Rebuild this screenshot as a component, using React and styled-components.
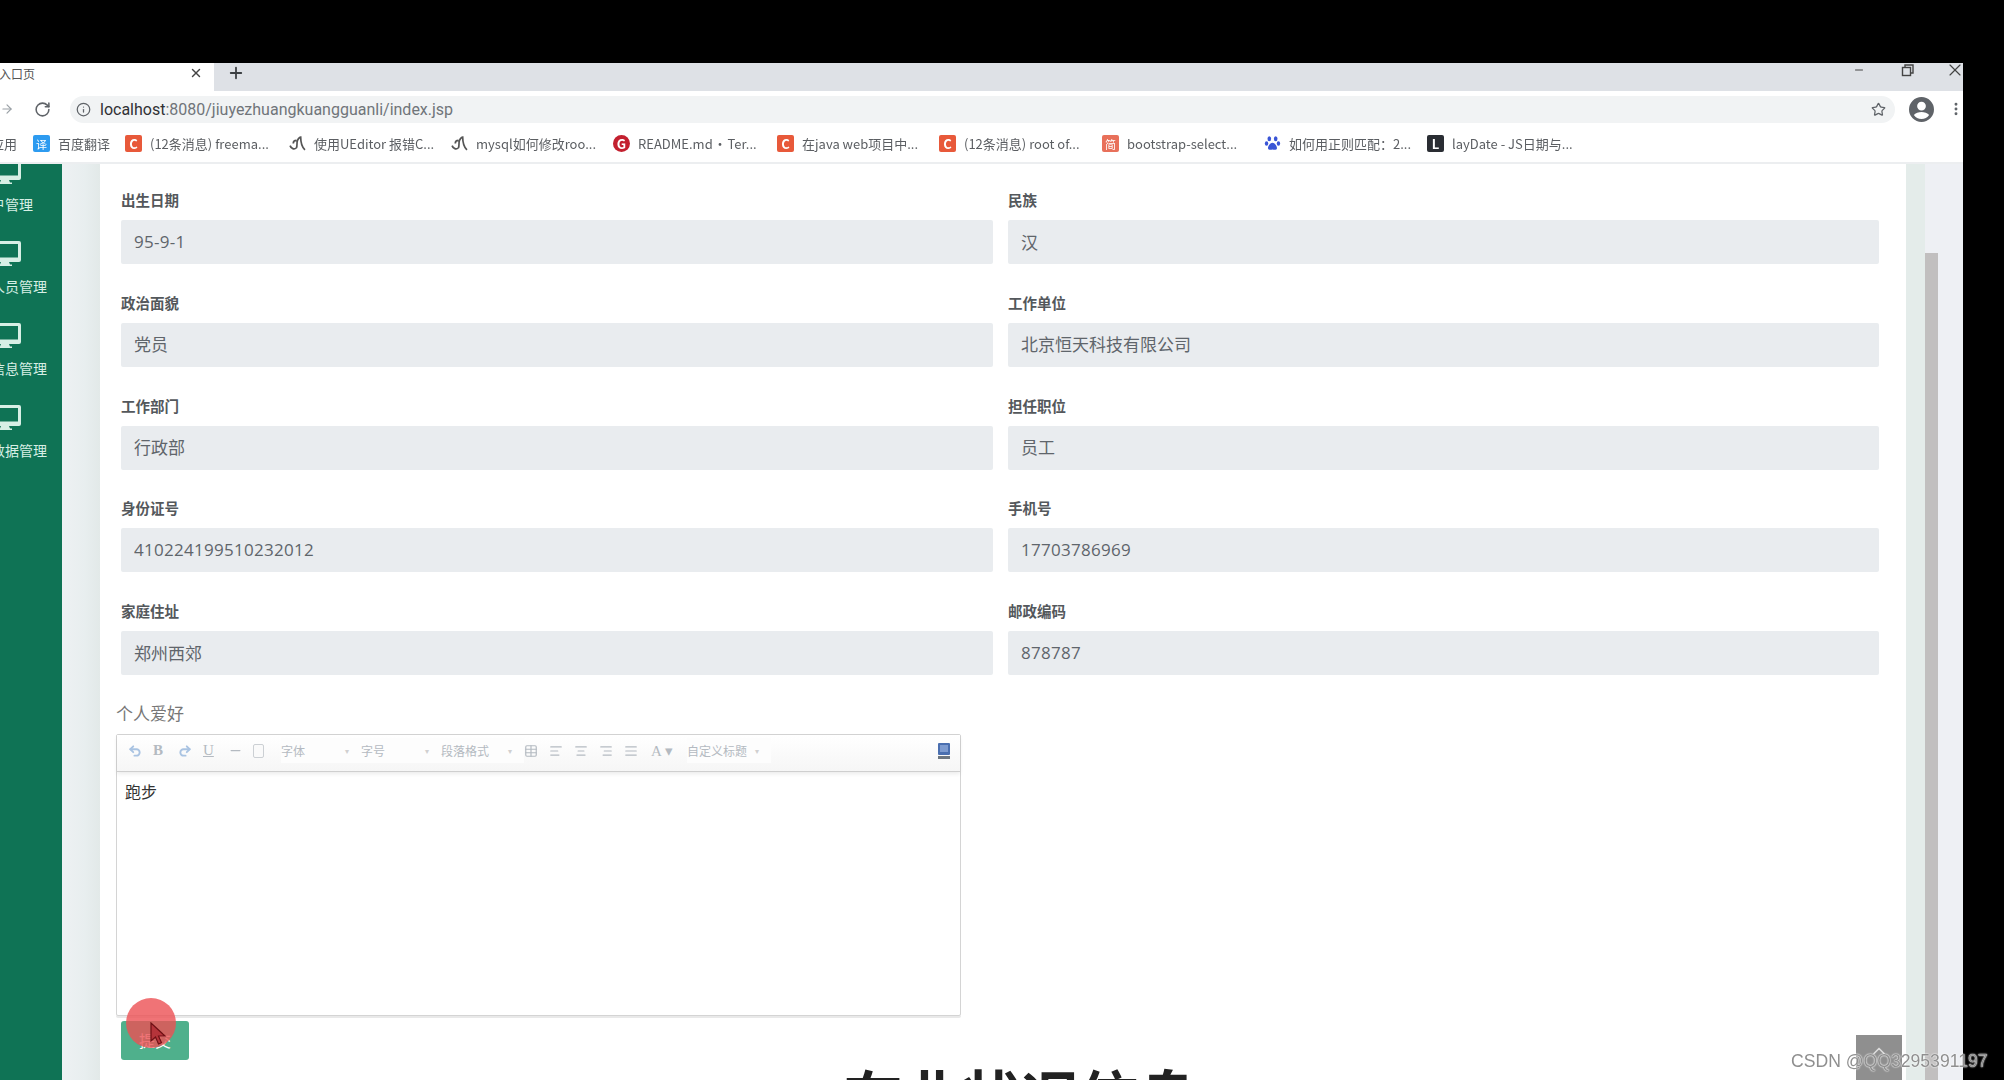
import React from "react";
import styled, { createGlobalStyle } from "styled-components";
import { Undo2, Redo2, Minus, AlignLeft, AlignCenter, AlignRight, AlignJustify, Table, Star, Info, ArrowRight, RotateCw, X, Plus, ChevronUp, MoreVertical } from "lucide-react";

const CJK = '"Open Sans", "Noto Sans CJK SC", sans-serif';

const Global = createGlobalStyle`
  html, body { margin: 0; padding: 0; background: #000; overflow: hidden; }
  * { box-sizing: border-box; }
  body { font-family: ${CJK}; }
`;

const Page = styled.div`
  position: relative;
  width: 2004px;
  height: 1080px;
  overflow: hidden;
  background: #000;
  padding-top: 63px;
`;
const Win = styled.div`
  width: 1963px;
  height: 1017px;
  display: flex;
  flex-direction: column;
  background: #fff;
  filter: blur(0.45px);
`;
const TabStrip = styled.div`
  height: 28px;
  display: flex;
  align-items: stretch;
  background: #dee1e6;
  flex: none;
`;
const Tab = styled.div`
  width: 214px;
  background: #fff;
  display: flex;
  align-items: center;
  justify-content: space-between;
  padding: 0 11px 8px 0;
  font-size: 12px;
  color: #555;
  overflow: hidden;
`;
const TabTitle = styled.span`
  margin-left: -1px;
  font-family: "Noto Sans CJK SC", sans-serif;
`;
const NewTab = styled.div`
  width: 43px;
  display: flex;
  align-items: center;
  justify-content: center;
  color: #3c4043;
  padding-bottom: 8px;
  border-bottom-left-radius: 8px;
`;
const StripSpace = styled.div`
  flex: 1;
`;
const WinCtrls = styled.div`
  display: flex;
  align-items: flex-start;
  color: #444;
  gap: 28px;
  margin: -1px -2px 0 0;
`;
const WinBtn = styled.div`
  width: 20px;
  height: 16px;
  display: flex;
  align-items: center;
  justify-content: center;
`;
const Toolbar = styled.div`
  height: 36px;
  flex: none;
  display: flex;
  align-items: center;
  background: #fff;
  color: #5f6368;
`;
const NavBtn = styled.div`
  width: ${(p) => p.$w}px;
  margin-left: ${(p) => p.$ml || 0}px;
  display: flex;
  justify-content: center;
  flex: none;
`;
const Omnibox = styled.div`
  width: 1825px;
  height: 27px;
  border-radius: 14px;
  background: #f1f3f4;
  display: flex;
  align-items: center;
  padding: 0 9px 0 6px;
  gap: 9px;
  flex: none;
`;
const Url = styled.span`
  font-family: "Roboto", sans-serif;
  font-size: 16px;
  color: #70757a;
  flex: 1;
`;
const UrlHost = styled.span`
  color: #303134;
`;
const Avatar = styled.div`
  flex: none;
  margin-left: 14px;
  display: flex;
`;
const Bookmarks = styled.div`
  height: 35px;
  flex: none;
  display: flex;
  align-items: center;
  padding-bottom: 2px;
  font-family: "Noto Sans CJK SC", sans-serif;
  font-size: 13px;
  color: #5b5e62;
  background: #fff;
`;
const Bookmark = styled.div`
  width: ${(p) => p.$w}px;
  flex: none;
  display: flex;
  align-items: center;
  gap: 8px;
  white-space: nowrap;
  word-spacing: ${(p) => (p.$tight ? "-2px" : "0")};
`;
const BIcon = styled.span`
  width: 17px;
  height: 17px;
  flex: none;
  border-radius: ${(p) => (p.$round ? "50%" : "2px")};
  display: flex;
  align-items: center;
  justify-content: center;
  color: #fff;
  font: ${(p) => (p.$small ? "11px" : "bold 13px")} "Noto Sans CJK SC", sans-serif;
  background: ${(p) => p.$bg};
`;
const BIconSvg = styled.svg`
  width: 17px;
  height: 17px;
  flex: none;
`;
const AppsLabel = styled.div`
  width: 42px;
  flex: none;
  margin-left: -9px;
  overflow: hidden;
  white-space: nowrap;
`;
const Body = styled.div`
  flex: 1;
  min-height: 0;
  display: flex;
  overflow: hidden;
  border-top: 2px solid #eceef0;
`;
const Sidebar = styled.nav`
  width: 62px;
  flex: none;
  background: #0f7355;
  color: #d7efe5;
  margin-top: -2px;
  z-index: 1;
  overflow: hidden;
`;
const SideItem = styled.div`
  width: 10px;
  height: 82px;
  display: flex;
  flex-direction: column;
  align-items: center;
  margin-top: ${(p) => (p.$first ? "-3px" : "0")};
`;
const SideIcon = styled.svg`
  width: 32px;
  height: 25px;
  flex: none;
`;
const SideLabel = styled.div`
  margin-top: 10px;
  line-height: 20px;
  font-size: 14px;
  white-space: nowrap;
  font-family: "Noto Sans CJK SC", sans-serif;
`;
const Gutter = styled.div`
  width: 38px;
  flex: none;
  background: linear-gradient(90deg, #eef1f3, #e8eeef 60%, #e2e9e8);
`;
const Main = styled.main`
  flex: 1;
  min-width: 0;
  background: #fff;
  padding: 27px 27px 0 21px;
`;
const FormGrid = styled.div`
  display: grid;
  grid-template-columns: 872px 871px;
  column-gap: 15px;
  row-gap: 29.75px;
`;
const Field = styled.div`
  display: flex;
  flex-direction: column;
`;
const FieldLabel = styled.label`
  height: 20px;
  line-height: 20px;
  margin-bottom: 9px;
  font-size: 14.5px;
  font-weight: 700;
  color: #54585c;
`;
const Input = styled.input`
  height: 44px;
  width: 100%;
  border: 0;
  border-radius: 2px;
  background: #e9ecef;
  color: #5f656b;
  font-family: ${CJK};
  font-size: 17px;
  letter-spacing: ${(p) => (p.$digits ? "0.28px" : "0")};
  padding: 0 13px 2px;
  outline: none;
`;
const HobbyLabel = styled.div`
  margin: 27px 0 0 -5px;
  height: 24px;
  line-height: 24px;
  font-size: 17px;
  color: #777;
`;
const Editor = styled.div`
  margin: 7.5px 0 0 -5px;
  width: 845px;
  height: 282px;
  border: 1px solid #d4d4d4;
  border-radius: 2px;
  box-shadow: 0 2px 0 #e9e9e9;
  display: flex;
  flex-direction: column;
`;
const EdToolbar = styled.div`
  height: 37px;
  flex: none;
  display: flex;
  align-items: center;
  background: linear-gradient(#fff, #f6f6f6);
  border-bottom: 1px solid #cfcfcf;
  box-shadow: 0 2px 4px rgba(0,0,0,.08);
  padding: 0 9px 4px 11px;
  color: #b4bac1;
  font-family: "Noto Sans CJK SC", sans-serif;
  font-size: 12px;
`;
const Tool = styled.span`
  width: ${(p) => p.$w || 25}px;
  flex: none;
  display: flex;
  align-items: center;
`;
const SerifTool = styled(Tool)`
  font: ${(p) => (p.$plain ? "400" : "700")} 15px "Liberation Serif", serif;
  text-decoration: ${(p) => (p.$under ? "underline" : "none")};
`;
const SelectTool = styled(Tool)`
  height: 25px;
  background: #fdfdfd;
  justify-content: space-between;
  padding-right: 12px;
  &::after {
    content: "▾";
    font-size: 8px;
    color: #d0d0d0;
  }
`;
const BoxIcon = styled.span`
  width: 11px;
  height: 14px;
  border: 1px solid #ccd0d4;
  border-radius: 2px;
  background: #fafafa;
`;
const EdSpace = styled.div`
  flex: 1;
`;
const EdBody = styled.div`
  flex: 1;
  padding: 6px 8px;
  font-size: 16px;
  line-height: 26px;
  color: #333;
  font-family: "Noto Sans CJK SC", sans-serif;
`;
const Submit = styled.button`
  display: block;
  margin-top: 5px;
  width: 68px;
  height: 39px;
  border: 0;
  border-radius: 3px;
  background: #4fb08c;
  color: #fff;
  font-size: 16px;
  font-family: "Noto Sans CJK SC", sans-serif;
  padding: 0;
`;
const Title = styled.h1`
  margin: 6px 0 0;
  padding-left: 41px;
  text-align: center;
  font-size: 59px;
  line-height: 58px;
  font-weight: 700;
  color: #222;
  font-family: "Noto Sans CJK SC", sans-serif;
  white-space: nowrap;
`;
const Strip = styled.div`
  width: 19px;
  flex: none;
  background: #e4ecea;
`;
const Track = styled.div`
  width: 38px;
  flex: none;
  background: #eef0f4;
  padding-top: 89px;
`;
const Thumb = styled.div`
  width: 13px;
  height: 100%;
  background: #c1bfbf;
`;
const Spot = styled.div`
  position: absolute;
  left: 126px;
  top: 998px;
  width: 50px;
  height: 50px;
  border-radius: 50%;
  background: rgba(236, 80, 84, 0.8);
`;
const Pointer = styled.svg`
  position: absolute;
  left: 150px;
  top: 1022px;
  width: 17px;
  height: 24px;
`;
const BackTop = styled.div`
  position: absolute;
  left: 1856px;
  top: 1035px;
  width: 46px;
  height: 45px;
  background: #8f8f8f;
  display: flex;
  justify-content: center;
  color: #ddd;
  padding-top: 6px;
`;
const Watermark = styled.div`
  position: absolute;
  left: 1791px;
  top: 1050px;
  font: 17.6px/22px "Liberation Sans", sans-serif;
  color: #8f8f8f;
  text-shadow: 0 0 2px #fff, 0 0 1px #fff;
  white-space: nowrap;
`;

const fields = [
  ["出生日期", "95-9-1"], ["民族", "汉"],
  ["政治面貌", "党员"], ["工作单位", "北京恒天科技有限公司"],
  ["工作部门", "行政部"], ["担任职位", "员工"],
  ["身份证号", "410224199510232012"], ["手机号", "17703786969"],
  ["家庭住址", "郑州西郊"], ["邮政编码", "878787"],
];
const menu = ["用户管理", "就业人员管理", "就业信息管理", "就业数据管理"];

const Mon = () => (
  <SideIcon viewBox="0 0 32 25">
    <path fill="currentColor" fillRule="evenodd" d="M2 0h28a2 2 0 0 1 2 2v17a2 2 0 0 1-2 2H20l1 2.5h2V25H9v-1.5h2l1-2.5H2a2 2 0 0 1-2-2V2a2 2 0 0 1 2-2zm1 3v13.5h26V3z" />
  </SideIcon>
);
const Feather = () => (
  <BIconSvg viewBox="0 0 16 16">
    <path d="M1 10c1 3 4 4 6 2 1-2 0-4 1-7 1-2 2-3 3-3 0 5 1 9 4 12M7 5c-2 0-3 1-3 3" fill="none" stroke="#555" strokeWidth="1.6" />
  </BIconSvg>
);
const Paw = () => (
  <BIconSvg viewBox="0 0 16 16">
    <g fill="#3a55d6">
      <ellipse cx="5" cy="3.5" rx="1.7" ry="2.4" /><ellipse cx="11" cy="3.5" rx="1.7" ry="2.4" />
      <ellipse cx="2.4" cy="8" rx="1.6" ry="2.1" /><ellipse cx="13.6" cy="8" rx="1.6" ry="2.1" />
      <path d="M8 7.2c2 0 4.6 3.4 4.2 5.4-.4 1.8-2.8 1.4-4.2 1-1.4.4-3.8.8-4.2-1C3.4 10.6 6 7.2 8 7.2z" />
    </g>
  </BIconSvg>
);

const marks = [
  { w: 92, bg: "#2d9bf0", t: "译", small: true, label: "百度翻译" },
  { w: 164, bg: "#e8593a", t: "C", label: "(12条消息) freema..." },
  { w: 162, svg: <Feather />, label: "使用UEditor 报错C..." },
  { w: 162, svg: <Feather />, label: "mysql如何修改roo..." },
  { w: 164, bg: "#c3202f", t: "G", round: true, tight: true, label: "README.md · Ter..." },
  { w: 162, bg: "#e8593a", t: "C", label: "在java web项目中..." },
  { w: 163, bg: "#e8593a", t: "C", label: "(12条消息) root of..." },
  { w: 162, bg: "#e8705a", t: "简", small: true, label: "bootstrap-select..." },
  { w: 163, svg: <Paw />, label: "如何用正则匹配：2..." },
  { w: 160, bg: "#2a2d33", t: "L", label: "layDate - JS日期与..." },
];

export default function App() {
  return (
    <Page>
      <Global />
      <Win>
        <TabStrip>
          <Tab>
            <TabTitle>入口页</TabTitle>
            <X size={14} strokeWidth={2.4} color="#444" />
          </Tab>
          <NewTab><Plus size={18} strokeWidth={2.4} /></NewTab>
          <StripSpace />
          <WinCtrls>
            <WinBtn><Minus size={12} /></WinBtn>
            <WinBtn>
              <svg width="13" height="13" viewBox="0 0 13 13" fill="none" stroke="#444" strokeWidth="1.4">
                <rect x="1.5" y="3.5" width="8" height="8" /><path d="M4 3V1h8v8h-2" />
              </svg>
            </WinBtn>
            <WinBtn><X size={20} strokeWidth={1.4} /></WinBtn>
          </WinCtrls>
        </TabStrip>
        <Toolbar>
          <NavBtn $w={14}><ArrowRight size={18} color="#9aa0a6" /></NavBtn>
          <NavBtn $w={56}><RotateCw size={17} strokeWidth={2.2} /></NavBtn>
          <Omnibox>
            <Info size={15} />
            <Url><UrlHost>localhost</UrlHost>:8080/jiuyezhuangkuangguanli/index.jsp</Url>
            <Star size={15} />
          </Omnibox>
          <Avatar>
            <svg width="25" height="25" viewBox="0 0 24 24">
              <path fill="#5f6368" d="M12 0a12 12 0 1 0 0 24 12 12 0 0 0 0-24zm0 4.5a4.2 4.2 0 1 1 0 8.4 4.2 4.2 0 0 1 0-8.4zm0 16.6c-3 0-5.7-1.5-7.3-3.8 1.2-1.9 4.8-2.9 7.3-2.9s6.1 1 7.3 2.9c-1.6 2.3-4.3 3.8-7.3 3.8z" />
            </svg>
          </Avatar>
          <NavBtn $w={16} $ml={14}><MoreVertical size={16} strokeWidth={2.4} /></NavBtn>
        </Toolbar>
        <Bookmarks>
          <AppsLabel>应用</AppsLabel>
          {marks.map((m) => (
            <Bookmark key={m.label} $w={m.w} $tight={m.tight}>
              {m.svg || <BIcon $bg={m.bg} $round={m.round} $small={m.small}>{m.t}</BIcon>}
              <span>{m.label}</span>
            </Bookmark>
          ))}
        </Bookmarks>
        <Body>
          <Sidebar>
            {menu.map((m, i) => (
              <SideItem key={m} $first={i === 0}>
                <Mon />
                <SideLabel>{m}</SideLabel>
              </SideItem>
            ))}
          </Sidebar>
          <Gutter />
          <Main>
            <FormGrid>
              {fields.map(([l, v]) => (
                <Field key={l}>
                  <FieldLabel>{l}</FieldLabel>
                  <Input readOnly value={v} $digits={/^\d/.test(v)} />
                </Field>
              ))}
            </FormGrid>
            <HobbyLabel>个人爱好</HobbyLabel>
            <Editor>
              <EdToolbar>
                <Tool><Undo2 size={14} strokeWidth={3.2} color="#a9c3e2" /></Tool>
                <SerifTool>B</SerifTool>
                <Tool><Redo2 size={14} strokeWidth={3.2} color="#a9c3e2" /></Tool>
                <SerifTool $plain $under>U</SerifTool>
                <Tool><Minus size={15} /></Tool>
                <Tool $w={28}><BoxIcon /></Tool>
                <SelectTool $w={80}>字体</SelectTool>
                <SelectTool $w={80}>字号</SelectTool>
                <SelectTool $w={83}>段落格式</SelectTool>
                <Tool><Table size={14} /></Tool>
                <Tool><AlignLeft size={14} /></Tool>
                <Tool><AlignCenter size={14} /></Tool>
                <Tool><AlignRight size={14} /></Tool>
                <Tool $w={27}><AlignJustify size={14} /></Tool>
                <SerifTool $w={36} $plain>A ▾</SerifTool>
                <SelectTool $w={84}>自定义标题</SelectTool>
                <EdSpace />
                <Tool $w={14}>
                  <svg width="14" height="16" viewBox="0 0 14 16">
                    <rect x="1" y="0" width="12" height="12" rx="1" fill="#4a6fb0" />
                    <rect x="3" y="2" width="8" height="7" fill="#7d9bd0" />
                    <rect x="1" y="13" width="12" height="3" fill="#6d7680" />
                  </svg>
                </Tool>
              </EdToolbar>
              <EdBody>跑步</EdBody>
            </Editor>
            <Submit>提交</Submit>
            <Title>在业状况信息</Title>
          </Main>
          <Strip />
          <Track><Thumb /></Track>
        </Body>
      </Win>
      <Spot />
      <Pointer viewBox="0 0 17 24">
        <path d="M1 1v18l4.5-4 3 7 3-1.3-3-6.7H15z" fill="#b5343a" stroke="#6e0f14" strokeWidth="1.2" />
      </Pointer>
      <BackTop><ChevronUp size={20} strokeWidth={2} /></BackTop>
      <Watermark>CSDN @QQ3295391197</Watermark>
    </Page>
  );
}
